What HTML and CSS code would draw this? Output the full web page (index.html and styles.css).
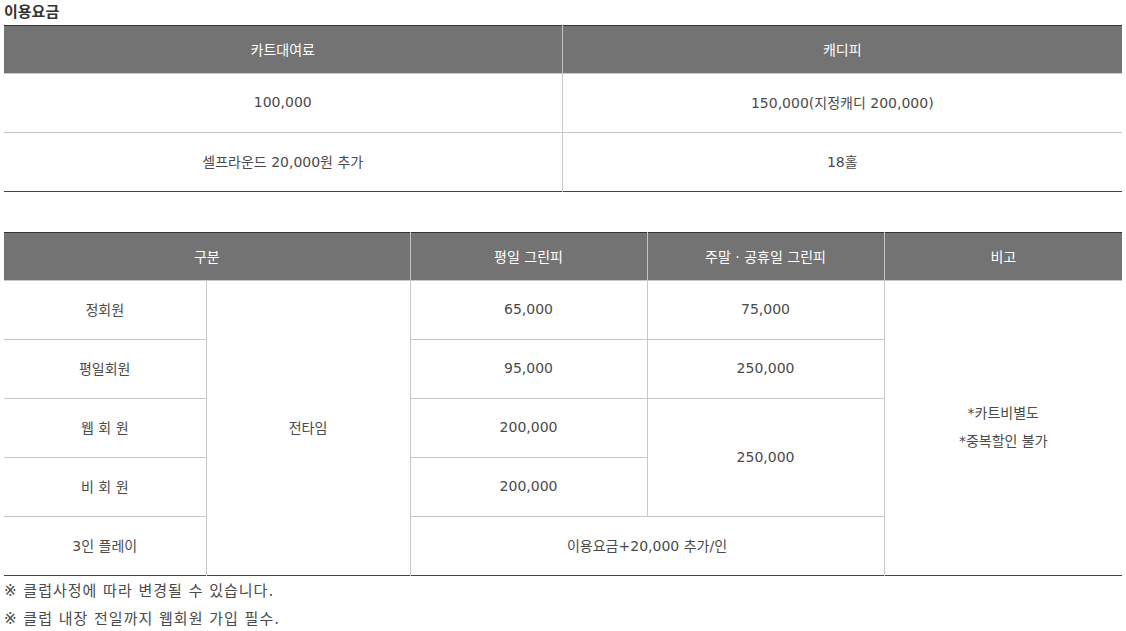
FILE: index.html
```html
<!DOCTYPE html>
<html lang="ko">
<head>
<meta charset="utf-8">
<title>이용요금</title>
<link rel="stylesheet" href="styles.css">
</head>
<body>
<div class="wrap">
  <h2 class="title">이용요금</h2>
  <table class="fee fee-top">
    <colgroup><col class="c-half1"><col class="c-half2"></colgroup>
    <thead>
      <tr><th>카트대여료</th><th>캐디피</th></tr>
    </thead>
    <tbody>
      <tr><td>100,000</td><td>150,000(지정캐디 200,000)</td></tr>
      <tr><td>셀프라운드 20,000원 추가</td><td>18홀</td></tr>
    </tbody>
  </table>

  <table class="fee fee-green">
    <colgroup>
      <col class="c1"><col class="c2"><col class="c3"><col class="c4"><col class="c5">
    </colgroup>
    <thead>
      <tr><th colspan="2">구분</th><th>평일 그린피</th><th>주말 · 공휴일 그린피</th><th>비고</th></tr>
    </thead>
    <tbody>
      <tr>
        <td class="first">정회원</td>
        <td rowspan="5">전타임</td>
        <td>65,000</td>
        <td>75,000</td>
        <td rowspan="5" class="note-cell"><p>*카트비별도</p><p>*중복할인 불가</p></td>
      </tr>
      <tr><td class="first">평일회원</td><td>95,000</td><td>250,000</td></tr>
      <tr><td class="first">웹 회 원</td><td>200,000</td><td rowspan="2">250,000</td></tr>
      <tr><td class="first">비 회 원</td><td>200,000</td></tr>
      <tr><td class="first">3인 플레이</td><td colspan="2">이용요금+20,000 추가/인</td></tr>
    </tbody>
  </table>

  <ul class="notes">
    <li>※ 클럽사정에 따라 변경될 수 있습니다.</li>
    <li>※ 클럽 내장 전일까지 웹회원 가입 필수.</li>
  </ul>
</div>
</body>
</html>
```

FILE: styles.css
```css
* { box-sizing: border-box; }
html, body { margin: 0; padding: 0; background: #fff; }
body {
  font-family: "DejaVu Sans", "Noto Sans CJK KR", sans-serif;
  font-size: 14px;
  color: #4a4a4a;
}
.wrap { padding: 0 4px; width: 1126px; }
.title {
  margin: 0;
  font-family: "Noto Sans CJK KR", sans-serif;
  font-size: 15px;
  font-weight: bold;
  line-height: 21px;
  height: 25px;
  color: #333;
}
.fee {
  width: 1118px;
  border-collapse: collapse;
  table-layout: fixed;
  border-top: 1px solid #333;
  border-bottom: 1px solid #444;
}
.fee th {
  background: #737373;
  color: #fff;
  font-weight: normal;
  height: 48px;
  padding: 0 0 2px;
  text-align: center;
  border-left: 1px solid #c4c4c4;
}
.fee td {
  height: 59px;
  padding: 0 0 2px;
  text-align: center;
  border-top: 1px solid #c8c8c8;
  border-left: 1px solid #c8c8c8;
}
.fee th:first-child, .fee td.first, .fee-top td:first-child { border-left: none; }
.c-half1 { width: 558px; }
.c-half2 { width: 560px; }
.fee-green { margin-top: 40px; }
.c1 { width: 202px; }
.c2 { width: 204px; }
.c3 { width: 237px; }
.c4 { width: 237px; }
.c5 { width: 238px; }
.note-cell p { margin: 0; line-height: 28px; }
.notes {
  list-style: none;
  margin: 0;
  padding: 0;
  font-size: 15px;
  letter-spacing: 1px;
}
.notes li { line-height: 28px; padding-top: 1px; height: 28px; }
```
